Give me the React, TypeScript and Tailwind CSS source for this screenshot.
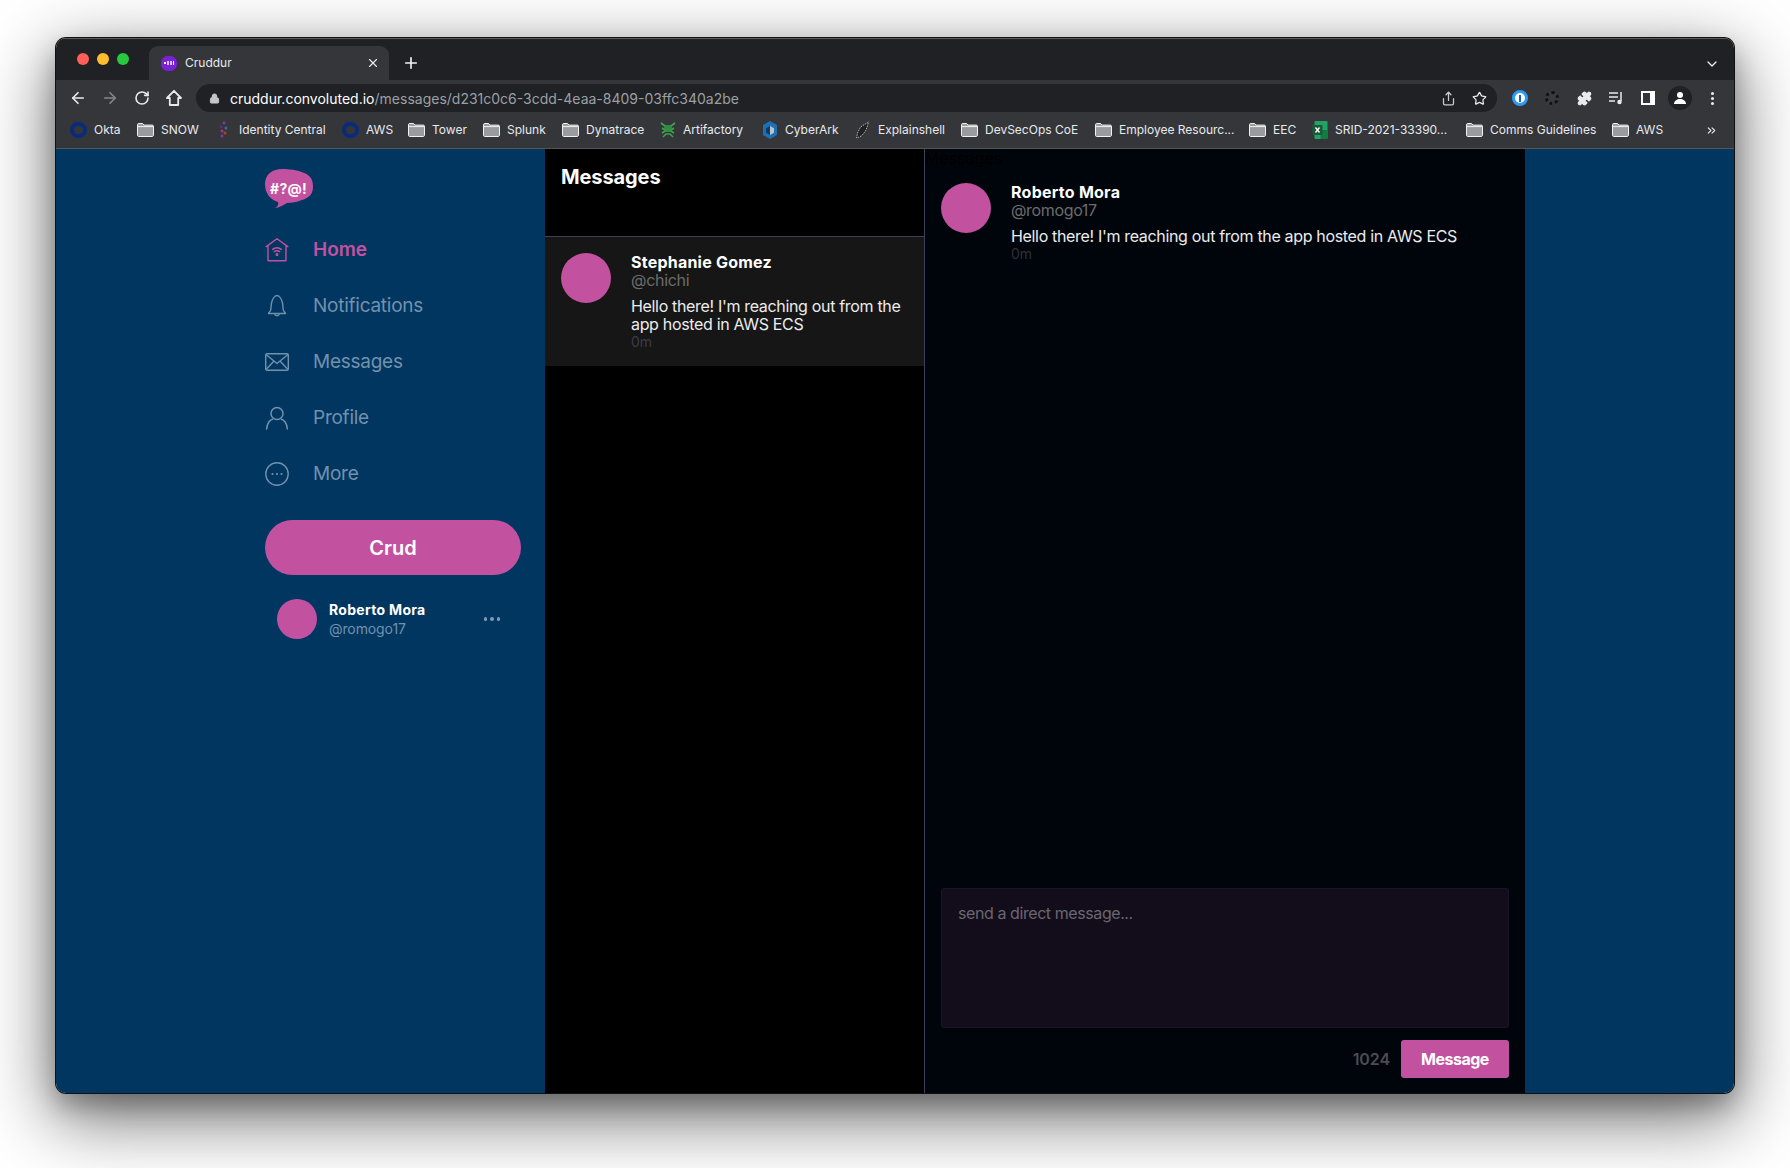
import { ArrowLeft, ArrowRight, ChevronDown, ChevronsRight, Lock, Plus, Puzzle, RotateCw, Share, Star, X } from "lucide-react";
import type { ReactNode } from "react";

const Folder = () => (
	<svg width="17" height="14" viewBox="0 0 17 14" className="shrink-0">
		<path d="M.5 3V1.800C.5 1 1 .5 1.800.5h3.800l1.300 1.600h8.300c.8 0 1.300.5 1.300 1.300V12c0 .9-.5 1.500-1.300 1.500H1.800C1 13.500.5 13 .5 12z" fill="#9a9b9e" stroke="#f1f1f1" />
		<path d="M.5 3.600h16" stroke="#f1f1f1" />
	</svg>
);

const Ring = () => <span className="block w-[17px] h-[16px] shrink-0 rounded-full border-[4px] border-[#0a2a7a]" />;

const IdentityIcon = () => (
	<svg width="16" height="18" viewBox="0 0 14 18" className="shrink-0">
		<circle cx="7" cy="2" r="1.500" fill="#7d3c98" />
		<circle cx="4" cy="6" r="1.500" fill="#5b2c83" />
		<circle cx="9" cy="7" r="1.500" fill="#2e6fb0" />
		<circle cx="5" cy="10" r="1.500" fill="#a03a7a" />
		<circle cx="8" cy="12" r="1.500" fill="#c0392b" />
		<circle cx="5" cy="15" r="1.500" fill="#7d3c98" />
	</svg>
);

const FrogIcon = () => (
	<svg width="16" height="18" viewBox="0 0 16 18" className="shrink-0">
		<path d="M1 2l4 3h6l4-3M2 7l3 2h6l3-2M2 12l3-2h6l3 2M3 16l3-3h4l3 3" fill="none" stroke="#3fa34d" strokeWidth="1.600" />
		<ellipse cx="8" cy="7" rx="4" ry="3" fill="#2f8f3f" />
	</svg>
);

const CyberIcon = () => (
	<svg width="16" height="18" viewBox="0 0 15 18" className="shrink-0">
		<path d="M7.500 0l7 4v10l-7 4-7-4V4z" fill="#1f6fb5" />
		<path d="M7.500 5l4 2.200v4.600l-4 2.200z" fill="#b8c4cf" />
		<path d="M7.500 5l-4 2.200v4.600l4 2.200z" fill="#0d3b66" />
	</svg>
);

const ShellIcon = () => (
	<svg width="16" height="18" viewBox="0 0 15 18" className="shrink-0">
		<path d="M13 1L5 6 2 12l-1 5 5-2 4-5 2-5z" fill="#202124" stroke="#b0b0b0" strokeWidth="1" strokeDasharray="1.500 1" />
	</svg>
);

const ExcelIcon = () => (
	<svg width="16" height="18" viewBox="0 0 15 18" className="shrink-0">
		<rect x="2" y="0" width="13" height="18" rx="1" fill="#21a366" />
		<rect x="8" y="9" width="7" height="9" fill="#107c41" />
		<rect x="0" y="4" width="10" height="10" rx="1" fill="#185c37" />
		<path d="M3 6.500l4 5M7 6.500l-4 5" stroke="#fff" strokeWidth="1.300" />
	</svg>
);

const bookmarks: { label: string; icon: ReactNode; width: number }[] = [
	{ label: "Okta", icon: <Ring />, width: 67 },
	{ label: "SNOW", icon: <Folder />, width: 79 },
	{ label: "Identity Central", icon: <IdentityIcon />, width: 126 },
	{ label: "AWS", icon: <Ring />, width: 66 },
	{ label: "Tower", icon: <Folder />, width: 75 },
	{ label: "Splunk", icon: <Folder />, width: 79 },
	{ label: "Dynatrace", icon: <Folder />, width: 98 },
	{ label: "Artifactory", icon: <FrogIcon />, width: 102 },
	{ label: "CyberArk", icon: <CyberIcon />, width: 93 },
	{ label: "Explainshell", icon: <ShellIcon />, width: 106 },
	{ label: "DevSecOps CoE", icon: <Folder />, width: 134 },
	{ label: "Employee Resourc...", icon: <Folder />, width: 154 },
	{ label: "EEC", icon: <Folder />, width: 63 },
	{ label: "SRID-2021-33390...", icon: <ExcelIcon />, width: 154 },
	{ label: "Comms Guidelines", icon: <Folder />, width: 146 },
	{ label: "AWS", icon: <Folder />, width: 60 },
];

const HomeWifi = () => (
	<svg width="24" height="24" viewBox="0 0 24 24" fill="none" stroke="currentColor" strokeWidth="1.400" strokeLinejoin="round" strokeLinecap="round">
		<path d="M1.200 8.600L12 .8l10.800 7.800M3 8v14.200c0 .4.2.6.6.6h16.800c.4 0 .6-.2.6-.6V8" />
		<path d="M7.600 11.400c2.600-2 6.200-2 8.800 0M9.300 13.600c1.600-1.100 3.800-1.100 5.400 0" />
		<circle cx="12" cy="16.600" r=".8" fill="currentColor" />
	</svg>
);

const Bell = () => (
	<svg width="24" height="24" viewBox="0 0 24 24" fill="none" stroke="currentColor" strokeWidth="1.400" strokeLinejoin="round">
		<path d="M3.500 19.500c0-.8 1.400-1.600 2-3 .8-2.200.4-4.800 1-7.500C7.200 5.800 9.300 1.500 12 1.500S16.800 5.800 17.500 9c.6 2.700.2 5.300 1 7.500.6 1.400 2 2.200 2 3z" />
		<path d="M9.600 19.700c.3 1.400 1.200 2.100 2.400 2.100s2.100-.7 2.400-2.100" />
	</svg>
);

const Mail = () => (
	<svg width="24" height="24" viewBox="0 0 24 24" fill="none" stroke="currentColor" strokeWidth="1.400" strokeLinejoin="round">
		<rect x=".7" y="3.800" width="22.600" height="16.400" rx="1.200" />
		<path d="M1 4.500l11 9 11-9M1 19.500l7.800-8.300M23 19.500l-7.800-8.300" />
	</svg>
);

const Person = () => (
	<svg width="24" height="24" viewBox="0 0 24 24" fill="none" stroke="currentColor" strokeWidth="1.500" strokeLinecap="round">
		<circle cx="12" cy="7.500" r="6" />
		<path d="M1.600 23c.5-5.800 3.500-9.500 6-9.800M22.400 23c-.5-5.800-3.500-9.500-6-9.800" />
	</svg>
);

const MoreCircle = () => (
	<svg width="24" height="24" viewBox="0 0 24 24" fill="none" stroke="currentColor" strokeWidth="1.400">
		<circle cx="12" cy="12" r="11.200" />
		<circle cx="7.500" cy="12" r="1.100" fill="currentColor" stroke="none" />
		<circle cx="12" cy="12" r="1.100" fill="currentColor" stroke="none" />
		<circle cx="16.500" cy="12" r="1.100" fill="currentColor" stroke="none" />
	</svg>
);

const navItems = [
	{ label: "Home", icon: <HomeWifi />, active: true },
	{ label: "Notifications", icon: <Bell />, active: false },
	{ label: "Messages", icon: <Mail />, active: false },
	{ label: "Profile", icon: <Person />, active: false },
	{ label: "More", icon: <MoreCircle />, active: false },
];

const Logo = () => (
	<div className="relative w-[48px] h-[40px]">
		<svg width="48" height="40" viewBox="0 0 48 40" className="absolute inset-0">
			<path d="M0 15C0 5 8 0 17 0c10 0 20 2 26 6 4 3 5 7 5 12 0 7-4 11-11 13-5 2-10 3-15 3-4 2-8 5-12 5 2-1 4-3 3-6C6 31 0 25 0 15z" fill="#c252a0" />
		</svg>
		<span className="absolute left-[5px] top-[11px] text-[14px] leading-[18px] font-bold tracking-[0.3px] text-white">#?@!</span>
	</div>
);

const Sidebar = () => (
	<div className="w-[489px] bg-[#013661] flex justify-end shrink-0">
		<nav className="w-[280px] pt-[20px]">
			<Logo />
			<div className="flex flex-col mt-[13px]">
				{navItems.map((item) => (
					<div key={item.label} className={`flex items-center h-[56px] text-[19px] ${item.active ? "text-[#c252a0] font-semibold" : "text-[#7191ad] tracking-[-0.25px]"}`}>
						<span className="w-[24px] mr-[24px] flex justify-center">{item.icon}</span>
						{item.label}
					</div>
				))}
			</div>
			<button className="mt-[18px] w-[256px] h-[55px] rounded-full bg-[#c252a0] text-white text-[20px] font-semibold">Crud</button>
			<div className="mt-[24px] ml-[12px] w-[232px] flex items-center">
				<span className="w-[40px] h-[40px] rounded-full bg-[#c252a0] shrink-0" />
				<div className="ml-[12px] flex-1 pt-[1px]">
					<p className="text-[14px] leading-[18px] font-bold tracking-[0.3px] text-white">Roberto Mora</p>
					<p className="text-[14px] leading-[20px] tracking-[-0.1px] text-[#7191ad]">@romogo17</p>
				</div>
				<span className="flex gap-[3px] mr-[9px]">
					<i className="w-[3.500px] h-[3.500px] rounded-full bg-[#7f9bb4]" />
					<i className="w-[3.500px] h-[3.500px] rounded-full bg-[#7f9bb4]" />
					<i className="w-[3.500px] h-[3.500px] rounded-full bg-[#7f9bb4]" />
				</span>
			</div>
		</nav>
	</div>
);

const MessageList = () => (
	<div className="w-[380px] bg-black border-r border-[#3b4054] shrink-0">
		<div className="h-[88px] px-[16px] pt-[14px] border-b border-[#3b4054]">
			<h2 className="text-[20px] leading-[28px] font-bold tracking-[-0.1px] text-white">Messages</h2>
		</div>
		<div className="h-[129px] bg-[#161616] px-[16px] pt-[16px] flex gap-[20px]">
			<span className="w-[50px] h-[50px] rounded-full bg-[#c252a0] shrink-0" />
			<div className="w-[290px]">
				<p className="text-[16px] leading-[18px] font-bold tracking-[0.23px] text-white">Stephanie Gomez</p>
				<p className="text-[16px] leading-[18px] tracking-[-0.3px] text-[#6b6b6b]">@chichi</p>
				<p className="mt-[8px] text-[16px] leading-[18px] tracking-[-0.33px] text-[#ececec]">Hello there! I'm reaching out from the app hosted in AWS ECS</p>
				<p className="text-[14px] leading-[18px] text-[#3a3a48]">0m</p>
			</div>
		</div>
	</div>
);

const Conversation = () => (
	<div className="flex-1 bg-[#00050c] flex flex-col">
		<p className="text-[16px] leading-[18px] text-black">Messages</p>
		<div className="mt-[16px] px-[16px] flex gap-[20px]">
			<span className="w-[50px] h-[50px] rounded-full bg-[#c252a0] shrink-0" />
			<div>
				<p className="text-[16px] leading-[18px] font-bold tracking-[0.25px] text-white">Roberto Mora</p>
				<p className="text-[16px] leading-[18px] tracking-[-0.35px] text-[#6b6b6b]">@romogo17</p>
				<p className="mt-[8px] text-[16px] leading-[18px] tracking-[-0.33px] text-[#ececec]">Hello there! I'm reaching out from the app hosted in AWS ECS</p>
				<p className="text-[14px] leading-[18px] text-[#2e3038]">0m</p>
			</div>
		</div>
		<div className="mt-auto px-[16px] pb-[15px]">
			<textarea
				placeholder="send a direct message..."
				className="block w-full h-[140px] resize-none rounded-[3px] bg-[#130d1b] border border-[#1e1428] px-[16px] py-[15px] text-[16px] leading-[18px] tracking-[-0.42px] outline-none placeholder:text-[#6a6670]"
			/>
			<div className="mt-[12px] flex items-center justify-end gap-[11px]">
				<span className="text-[16px] font-semibold tracking-[-0.1px] text-[#4a4d52]">1024</span>
				<button className="w-[108px] h-[38px] rounded-[3px] bg-[#c252a0] text-white text-[16px] font-bold tracking-[-0.5px]">Message</button>
			</div>
		</div>
	</div>
);

const Favicon = () => (
	<span className="w-[16px] h-[15px] rounded-[7px] bg-[#7b22d8] shrink-0 flex items-center justify-center gap-[1px]">
		<i className="w-[2px] h-[2px] bg-white" />
		<i className="w-[2px] h-[4px] bg-[#d8bdf5]" />
		<i className="w-[2px] h-[4px] bg-[#d8bdf5]" />
		<i className="w-[1px] h-[4px] bg-white" />
	</span>
);

const TabStrip = () => (
	<div className="h-[42px] bg-[#202124] border-t border-[#5a5a5a] flex items-end relative">
		<div className="flex gap-[8px] ml-[21px] self-start mt-[14px]">
			<span className="w-[12px] h-[12px] rounded-full bg-[#ff5f57]" />
			<span className="w-[12px] h-[12px] rounded-full bg-[#febc2e]" />
			<span className="w-[12px] h-[12px] rounded-full bg-[#28c840]" />
		</div>
		<div className="ml-[20px] w-[240px] h-[34px] rounded-t-[9px] bg-[#35363a] flex items-center pl-[12px] pr-[9px]">
			<Favicon />
			<span className="ml-[8px] flex-1 text-[12px] text-[#e8eaed]">Cruddur</span>
			<X size={14} color="#e8eaed" />
		</div>
		<Plus size={18} color="#f1f3f4" className="ml-[13px] mb-[8px]" strokeWidth={2.200} />
		<ChevronDown size={16} color="#e8eaed" className="absolute right-[14px] top-[17px]" />
	</div>
);

const slot = "w-[32px] flex items-center justify-center shrink-0";

const Toolbar = () => (
	<div className="h-[36px] bg-[#35363a] flex items-center">
		<div className="w-[140px] flex items-center pl-[6px] shrink-0">
			<span className={slot}><ArrowLeft size={18} color="#e8eaed" strokeWidth={2.200} /></span>
			<span className={slot}><ArrowRight size={18} color="#85878a" strokeWidth={2.200} /></span>
			<span className={slot}><RotateCw size={16} color="#e8eaed" strokeWidth={2.400} /></span>
			<span className={slot}>
				<svg width="18" height="18" viewBox="0 0 18 18" fill="none" stroke="#e8eaed" strokeWidth="1.800" strokeLinejoin="round">
					<path d="M9 1.800L2 9h2.800v7h8.400V9H16z" />
				</svg>
			</span>
		</div>
		<div className="w-[1301px] h-[28px] rounded-full bg-[#202124] flex items-center pl-[13px] pr-[10px] shrink-0">
			<Lock size={11} color="#c4c6c9" fill="#c4c6c9" />
			<span className="ml-[10px] text-[14px] text-white">cruddur.convoluted.io<span className="text-[#9aa0a6]">/messages/d231c0c6-3cdd-4eaa-8409-03ffc340a2be</span></span>
			<span className="ml-auto flex items-center gap-[16px]">
				<Share size={15} color="#c8cacd" />
				<Star size={15} color="#e8eaed" />
			</span>
		</div>
		<div className="flex-1 flex items-center pl-[7px]">
			<span className={slot}>
				<span className="w-[16px] h-[16px] rounded-full border-[3px] border-[#2f9bf0] bg-white flex justify-center items-center"><i className="w-[2px] h-[7px] bg-[#1a5fb4]" /></span>
			</span>
			<span className={slot}>
				<span className="w-[14px] h-[14px] rounded-full border-[3px] border-dotted border-[#111] bg-[#3a3a3a]" />
			</span>
			<span className={slot}><Puzzle size={15} color="#e8eaed" fill="#e8eaed" /></span>
			<span className={slot}>
				<svg width="16" height="14" viewBox="0 0 16 14" fill="none" stroke="#e8eaed" strokeWidth="1.500">
					<path d="M1 2h9M1 6h9M1 10h6M13 1v9" />
					<circle cx="11.500" cy="11" r="1.500" fill="#e8eaed" />
				</svg>
			</span>
			<span className={slot}><span className="w-[14px] h-[14px] border-[2px] border-r-[5px] border-white" /></span>
			<span className={slot}>
				<span className="w-[24px] h-[24px] rounded-full bg-[#202124] flex items-center justify-center">
					<svg width="14" height="14" viewBox="0 0 14 14" fill="#fff">
						<circle cx="7" cy="4" r="3" />
						<path d="M1 13c0-3 3-5 6-5s6 2 6 5z" />
					</svg>
				</span>
			</span>
			<span className={slot}>
				<span className="flex flex-col gap-[2px]">
					<i className="w-[3px] h-[3px] rounded-full bg-[#e8eaed]" />
					<i className="w-[3px] h-[3px] rounded-full bg-[#e8eaed]" />
					<i className="w-[3px] h-[3px] rounded-full bg-[#e8eaed]" />
				</span>
			</span>
		</div>
	</div>
);

const BookmarkBar = () => (
	<div className="h-[33px] pb-[4px] bg-[#35363a] border-b border-[#55565a] flex items-center pl-[14px]">
		{bookmarks.map((b, i) => (
			<div key={i} className="flex items-center gap-[7px] shrink-0" style={{ width: b.width }}>
				{b.icon}
				<span className="text-[12px] text-[#e8eaed] whitespace-nowrap">{b.label}</span>
			</div>
		))}
		<ChevronsRight size={13} color="#e8eaed" className="ml-auto mr-[16px]" />
	</div>
);

export default function App() {
	return (
		<div className="w-[1790px] h-[1168px] bg-white overflow-hidden pt-[38px] pl-[56px] font-['Inter',sans-serif]">
			<div className="w-[1678px] h-[1055px] rounded-[10px] overflow-hidden flex flex-col shadow-[0_0_0_1px_#111,0_12px_24px_rgba(0,0,0,0.25),0_22px_70px_4px_rgba(0,0,0,0.56)]">
				<TabStrip />
				<Toolbar />
				<BookmarkBar />
				<div className="flex-1 flex min-h-0">
					<Sidebar />
					<MessageList />
					<Conversation />
					<div className="w-[209px] bg-[#013661] shrink-0" />
				</div>
			</div>
		</div>
	);
}
